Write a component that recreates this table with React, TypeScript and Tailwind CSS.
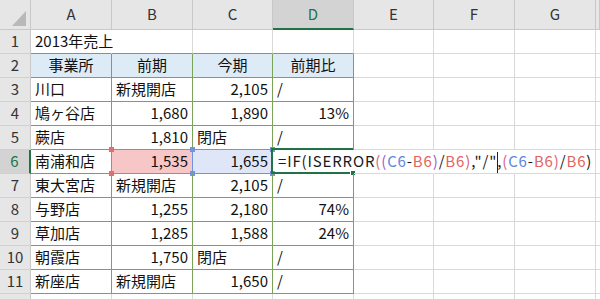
import React from "react";

// Column widths in px: row-number gutter, A..G, and the sliver of H.
const COL_W = [31, 81, 81, 80, 81, 80, 81, 81, 4];
const LETTERS = ["A", "B", "C", "D", "E", "F", "G", ""];

type Align = "l" | "r" | "c";
type Edge = "grid" | "table" | "none";

const FONT = "font-['Noto_Sans_CJK_JP','Noto_Sans',sans-serif]";

// Sheet contents for rows 1..11, columns A..D.
const DATA: string[][] = [
  ["2013年売上", "", "", ""],
  ["事業所", "前期", "今期", "前期比"],
  ["川口", "新規開店", "2,105", "/"],
  ["鳩ヶ谷店", "1,680", "1,890", "13%"],
  ["蕨店", "1,810", "閉店", "/"],
  ["南浦和店", "1,535", "1,655", ""],
  ["東大宮店", "新規開店", "2,105", "/"],
  ["与野店", "1,255", "2,180", "74%"],
  ["草加店", "1,285", "1,588", "24%"],
  ["朝霞店", "1,750", "閉店", "/"],
  ["新座店", "新規開店", "1,650", "/"],
];

const rightCls: Record<Edge, string> = {
  grid: "border-r border-r-[#d9d9d9]",
  table: "border-r border-r-[#7aa35a]",
  none: "border-r border-r-transparent",
};
const bottomCls: Record<Edge, string> = {
  grid: "border-b border-b-[#d9d9d9]",
  table: "border-b border-b-[#7aa35a]",
  none: "border-b border-b-transparent",
};
const alignCls: Record<Align, string> = {
  l: "justify-start",
  r: "justify-end",
  c: "justify-center",
};

function Handle({ pos, color }: { pos: "tl" | "tr" | "bl" | "br"; color: string }) {
  const p =
    pos === "tl"
      ? "-top-[3px] -left-[3px]"
      : pos === "tr"
      ? "-top-[3px] -right-[3px]"
      : pos === "bl"
      ? "-bottom-[3px] -left-[3px]"
      : "-bottom-[3px] -right-[3px]";
  return <span className={`absolute ${p} w-[5px] h-[5px] ${color}`} />;
}

function RefBox({ kind }: { kind: "red" | "blue" }) {
  const box =
    kind === "red"
      ? "bg-[#f7c6c6] border border-[#e86c69]"
      : "bg-[#dfe6f7] border border-[#7094e0]";
  const h = kind === "red" ? "bg-[#e86c69]" : "bg-[#7094e0]";
  return (
    <span className={`absolute -top-px -left-px right-[-1px] bottom-[-1px] ${box}`}>
      <Handle pos="tl" color={h} />
      <Handle pos="tr" color={h} />
      <Handle pos="bl" color={h} />
      <Handle pos="br" color={h} />
    </span>
  );
}

function ActiveBox() {
  return (
    <span className="absolute -top-[2px] -left-[2px] right-0 bottom-[-1px] border-2 border-r-0 border-[#217346]">
      <span className="absolute -bottom-[4px] -right-[3px] w-[6px] h-[6px] bg-[#217346] border border-white" />
    </span>
  );
}

function Formula() {
  const k = "text-[#1a1a1a]";
  const p1 = "text-[#e0607e]";
  const p2 = "text-[#9a62cc]";
  const c = "text-[#5b86dc]";
  const b = "text-[#e2645e]";
  return (
    <span className="relative whitespace-nowrap tracking-[0.85px]">
      <span className={k}>=IF(ISERROR</span>
      <span className={p1}>(</span>
      <span className={p2}>(</span>
      <span className={c}>C6</span>
      <span className={k}>-</span>
      <span className={b}>B6</span>
      <span className={p2}>)</span>
      <span className={k}>/</span>
      <span className={b}>B6</span>
      <span className={p1}>)</span>
      <span className={k}>,"/"</span>
      <span className="inline-block w-px h-[21px] bg-[#222] align-middle mr-[-1px]" />
      <span className={k}>,</span>
      <span className={p1}>(</span>
      <span className={c}>C6</span>
      <span className={k}>-</span>
      <span className={b}>B6</span>
      <span className={p1}>)</span>
      <span className={k}>/</span>
      <span className={b}>B6</span>
      <span className={k}>)</span>
    </span>
  );
}

function isNumeric(s: string) {
  return /^[\d,]+%?$/.test(s);
}

function ColumnHeader() {
  return (
    <div className="flex h-[30px]">
      {/* select-all corner */}
      <div
        className="relative shrink-0 bg-[#e6e6e6] border-r border-b border-[#c8c8c8]"
        style={{ width: COL_W[0] }}
      >
        <svg className="absolute left-0 top-0" width="31" height="30" viewBox="0 0 31 30">
          <polygon points="26,11 26,26 12,26" fill="#b9b9b9" />
        </svg>
      </div>
      {LETTERS.map((l, i) => {
        const sel = l === "D";
        return (
          <div
            key={i}
            className={`shrink-0 flex items-center justify-center text-[15px] ${
              sel
                ? "bg-[#d3d3d3] text-[#217346] border-r border-r-[#c8c8c8] border-b-2 border-b-[#217346]"
                : "bg-[#e6e6e6] text-[#333] border-r border-b border-[#c8c8c8]"
            }`}
            style={{ width: COL_W[i + 1] }}
          >
            {l}
          </div>
        );
      })}
    </div>
  );
}

function DataRow({ r }: { r: number }) {
  const vals = DATA[r - 1] ?? ["", "", "", ""];
  const activeRow = r === 6;
  const inTable = r >= 2 && r <= 11;
  return (
    <div className="flex h-[24px]">
      <div
        className={`shrink-0 flex items-center justify-center text-[15px] border-b border-b-[#d0d0d0] ${
          activeRow
            ? "bg-[#d3d3d3] text-[#217346] border-r-2 border-r-[#217346]"
            : "bg-[#e6e6e6] text-[#333] border-r border-r-[#c8c8c8]"
        }`}
        style={{ width: COL_W[0] }}
      >
        {r}
      </div>
      {LETTERS.map((_, ci) => {
        const v = ci < 4 ? vals[ci] : "";
        let right: Edge = "grid";
        let bottom: Edge = "grid";
        if (ci < 4 && (inTable || r === 1)) {
          bottom = "table";
          right = inTable ? "table" : "grid";
        }
        if (r === 1 && ci === 0) right = "none";
        if (activeRow && (ci === 3 || ci === 4 || ci === 5)) right = "none";
        let align: Align = isNumeric(v) ? "r" : "l";
        if (r === 2) align = "c";
        const bg = r === 2 && ci < 4 ? "bg-[#ddebf7]" : "";
        return (
          <div
            key={ci}
            className={`relative shrink-0 flex items-center px-[4px] whitespace-nowrap text-[15px] text-[#111] ${alignCls[align]} ${rightCls[right]} ${bottomCls[bottom]} ${bg}`}
            style={{ width: COL_W[ci + 1] }}
          >
            {activeRow && ci === 1 && <RefBox kind="red" />}
            {activeRow && ci === 2 && <RefBox kind="blue" />}
            {activeRow && ci === 3 && <ActiveBox />}
            {activeRow && ci === 3 ? (
              <span className="relative pl-px">
                <Formula />
              </span>
            ) : (
              <span className="relative">{v}</span>
            )}
          </div>
        );
      })}
    </div>
  );
}

export default function App() {
  const rows = Array.from({ length: 12 }, (_, i) => i + 1);
  return (
    <div className={`w-[600px] h-[299px] overflow-hidden bg-white ${FONT}`}>
      <ColumnHeader />
      {rows.map((r) => (
        <DataRow key={r} r={r} />
      ))}
    </div>
  );
}
